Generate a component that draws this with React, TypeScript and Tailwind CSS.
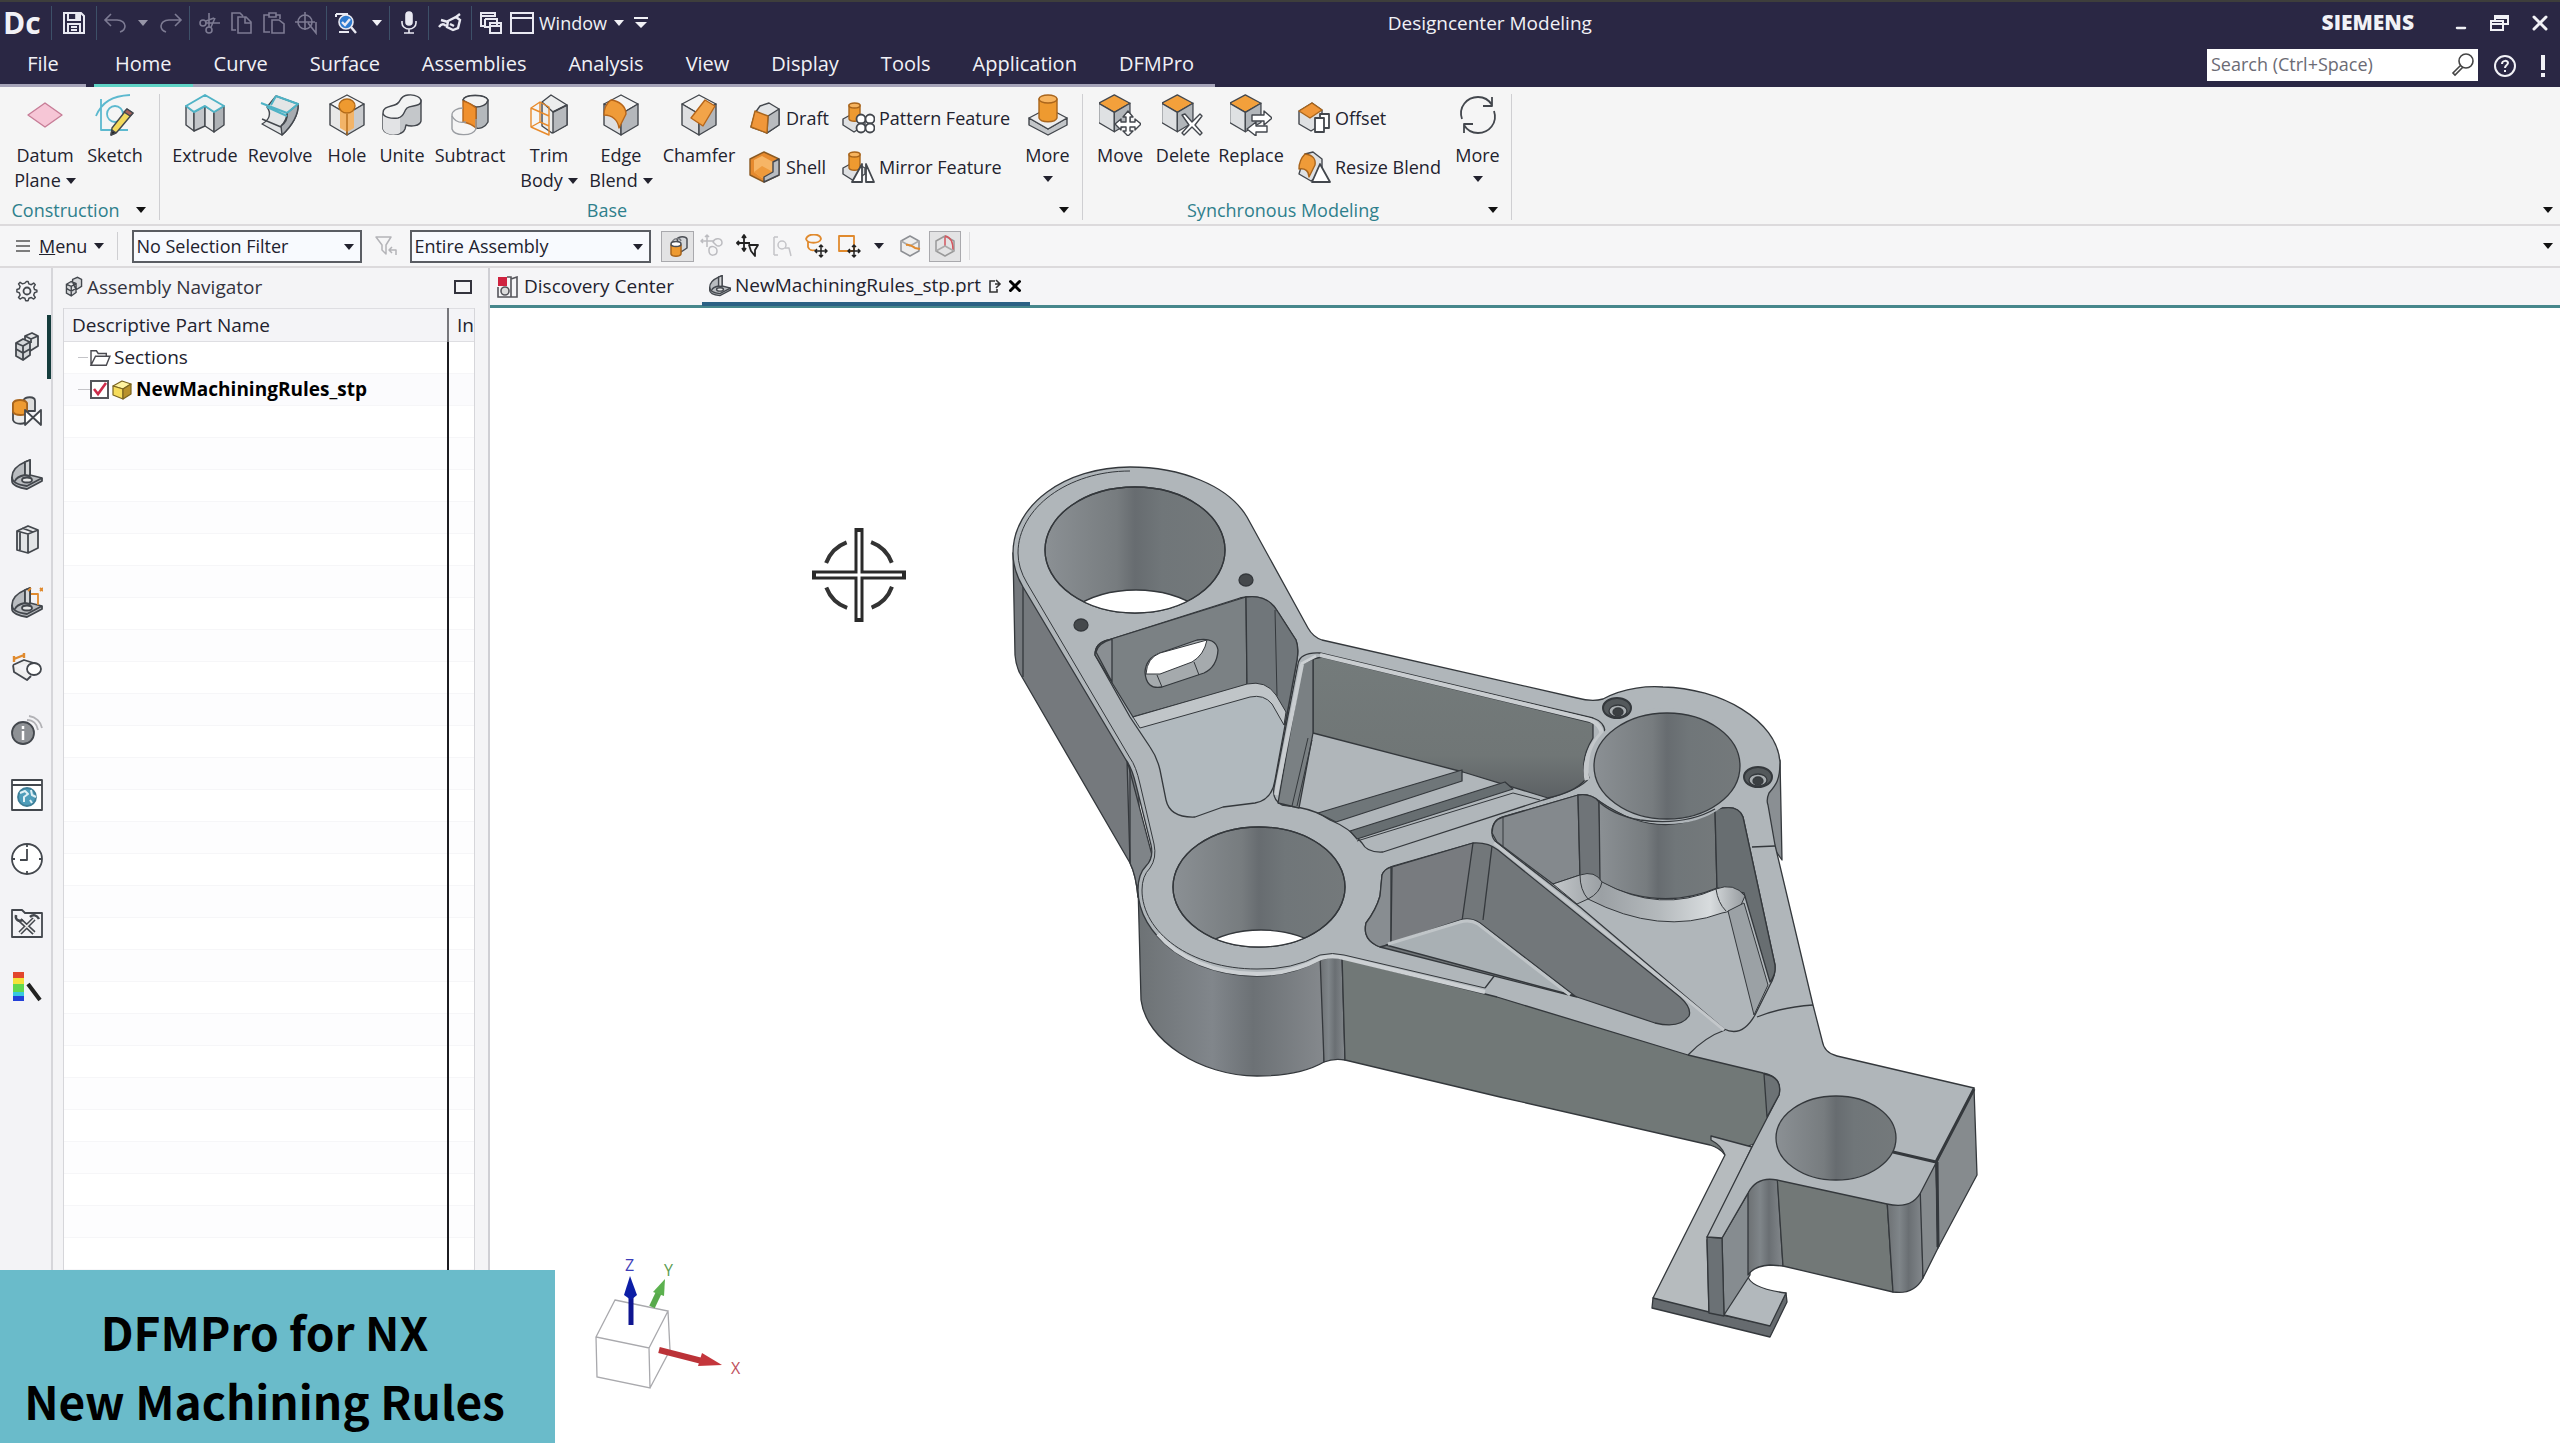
import { ReactNode, useState } from "react";
import { Minus, X } from "lucide-react";

const tabs = [
  "Home",
  "Curve",
  "Surface",
  "Assemblies",
  "Analysis",
  "View",
  "Display",
  "Tools",
  "Application",
  "DFMPro",
];

type IconProps = { className?: string };

const Caret = ({ className = "" }: IconProps) => (
  <svg viewBox="0 0 10 6" className={`h-[6px] w-[10px] shrink-0 ${className}`}>
    <path d="M0 0h10L5 6z" fill="currentColor" />
  </svg>
);

/* ---------- Quick access icons ---------- */

const Quick = ({ children, dim }: { children: ReactNode; dim?: boolean }) => (
  <svg
    viewBox="0 0 24 24"
    className={`h-[24px] w-[24px] ${dim ? "text-[#7d7b93]" : "text-[#e9e9f2]"}`}
    fill="none"
    stroke="currentColor"
    strokeWidth="1.6">
    {children}
  </svg>
);

const SaveIcon = () => (
  <Quick>
    <path d="M2 2h17l3 3v17H2z" strokeWidth="2" />
    <path d="M6 2v7h12V2M6 22v-9h12v9M9 16h6M9 19h6" strokeWidth="2" />
    <path d="M14 3h3v5h-3z" fill="currentColor" />
  </Quick>
);

const UndoIcon = () => (
  <Quick dim>
    <path d="M8 3 2 9l6 6M2 9h12c5 0 8 3 8 6s-2 5-5 6" />
  </Quick>
);

const RedoIcon = () => (
  <Quick dim>
    <path d="m16 3 6 6-6 6M22 9H10c-5 0-8 3-8 6s2 5 5 6" />
  </Quick>
);

const CutIcon = () => (
  <Quick dim>
    <circle cx="5" cy="12" r="3" />
    <circle cx="11" cy="19" r="3" />
    <path d="M8 12h14M11 16V2M13 16l4-9M8 10l8-3" />
  </Quick>
);

const CopyIcon = () => (
  <Quick dim>
    <path d="M6 19H2V2h8l3 3M8 6h8l5 5v11H8zM15 6v6h6" />
  </Quick>
);

const PasteIcon = () => (
  <Quick dim>
    <path d="M8 21H2V4h5M14 4h4v4M7 6V2h7v4zM10 9h7l5 4v9H10z" />
  </Quick>
);

const RepeatIcon = () => (
  <Quick dim>
    <circle cx="11" cy="11" r="7" />
    <path d="M1 11h20M11 1v18M14 12l8 10V11" />
  </Quick>
);

const FinderIcon = () => (
  <Quick>
    <path d="M2 3h12M2 3v3M5 21h10" strokeWidth="2" />
    <circle cx="12" cy="11" r="7" fill="#2f7bd0" />
    <path d="m8 11 3 3 5-6M17 16l5 6" strokeWidth="2.4" />
  </Quick>
);

const MicIcon = () => (
  <Quick>
    <rect x="9" y="1" width="6" height="13" rx="3" fill="currentColor" />
    <path d="M5 10v2a7 6 0 0 0 14 0v-2M12 18v4M7 22h10" />
  </Quick>
);

const TouchIcon = () => (
  <Quick>
    <path d="M1 16c3-4 5-3 7-1M10 10l8-4 4 3-2 8-5 2-6-3zM3 9l7 2M18 6l4-3M12 13l4 2" strokeWidth="2.4" />
  </Quick>
);

const SwitchIcon = () => (
  <Quick>
    <path d="M6 15H2V2h14v4M2 5h14" strokeWidth="2" />
    <path d="M6 8h12v8M6 8v8h5M11 12h11v10H11zM11 15h11" strokeWidth="2" />
  </Quick>
);

const WindowIcon = () => (
  <Quick>
    <path d="M1 2h22v20H1zM1 7h22" strokeWidth="2" />
  </Quick>
);

/* ---------- Ribbon icons ---------- */

const INK = "#43474d";

const Big = ({ children }: { children: ReactNode }) => (
  <svg
    viewBox="0 0 42 42"
    className="h-[42px] w-[42px] shrink-0"
    stroke={INK}
    strokeWidth="1.4"
    strokeLinejoin="round"
    fill="none">
    {children}
  </svg>
);

type BoxProps = { top?: string; left?: string; right?: string };

const Box = ({ top = "#f4f4f4", left = "#dedfe1", right = "#b4b7bb" }: BoxProps) => (
  <>
    <path d="M21 1 38 10 21 20 4 10z" fill={top} />
    <path d="M4 10v21l17 10V20z" fill={left} />
    <path d="M38 10v21L21 41V20z" fill={right} />
  </>
);

const DatumIcon = () => (
  <Big>
    <path d="M21 9 38 21 21 33 4 21z" fill="#f6c6d6" stroke="#c77d97" />
  </Big>
);

const SketchIcon = () => (
  <Big>
    <path d="M7 5v31h27M2 22C8 8 18 2 36 1" stroke="#5cb9cf" strokeWidth="1.8" />
    <circle cx="21" cy="20" r="8" stroke="#5cb9cf" strokeWidth="1.8" />
    <path d="m33 15 6 4-16 19-6 3 1-7z" fill="#f3d95c" />
    <path d="m33 15 6 4-3 3-6-4z" fill="#a8625a" />
    <path d="m18 36-1 5 5-2z" fill="#222" />
  </Big>
);

const ExtrudeIcon = () => (
  <Big>
    <path d="M2 12v19l8 6V18z" fill="#dcdee0" />
    <path d="m10 18 11-6v20l-11 5z" fill="#c2c5c9" />
    <path d="m21 12 9 6v20l-9-6z" fill="#e8e9ea" />
    <path d="m30 18 10-6v19l-10 7z" fill="#aeb2b6" />
    <path d="M2 12 21 1l19 11-10 6-9-6-11 6z" fill="#eef1f2" stroke="#4fb3c6" strokeWidth="2" />
  </Big>
);

const RevolveIcon = () => (
  <Big>
    <path d="M17 2 39 10C40 20 33 32 23 41L3 30C10 26 13 20 8 13z" fill="#e3e5e6" />
    <path d="M39 10C40 20 33 32 23 41l-1-9C30 26 28 20 28 19z" fill="#a7abb0" />
    <path d="M3 25l19 8M28 19c0 6-2 9-6 13" />
    <path d="M2 9l26 10M17 2l22 8-11 9M8 13l20 9M17 2l-5 9" stroke="#4fb3c6" strokeWidth="2" />
  </Big>
);

const HoleIcon = () => (
  <Big>
    <Box left="#e8e8e8" right="#c9cbce" />
    <path d="M14 14v20l7 4 7-4V14z" fill="#f3b468" stroke="none" />
    <ellipse cx="21" cy="12" rx="8" ry="7" fill="#ee9a30" stroke="#b36a18" />
    <path d="M21 20v21" stroke="#b36a18" />
  </Big>
);

const UniteIcon = () => (
  <Big>
    <path d="M2 20v15c2 6 19 8 22 0l1-4c5 2 14 1 15-4V6H21z" fill="#c4c7ca" />
    <path d="M2 20v15c2 6 12 7 17 4V24z" fill="#e2e3e5" stroke="none" />
    <path d="M2 19c0-7 8-6 14-9 4-2 2-8 11-9 8-1 13 3 13 6 0 6-10 4-14 7-4 4-2 8-9 10-7 1-15-1-15-5z" fill="#f2f3f3" />
  </Big>
);

const SubtractIcon = () => (
  <Big>
    <path d="M14 6c2-6 22-6 25 0v22c-3 6-9 7-12 6V12z" fill="#b4b8bc" />
    <path d="M14 6c2-6 22-6 25 0-1 5-7 7-12 7-5-2-9-4-13-7z" fill="#f2f2f2" />
    <path d="M14 7c6 1 9 4 13 7v20c-4-4-8-5-13-6z" fill="#f0902d" stroke="#b7661a" />
    <path d="M14 14c-6 0-11 3-11 7v14c2 7 20 8 24 0V25" stroke="#9a9da2" />
    <path d="M3 22c3 6 9 7 14 6" stroke="#9a9da2" />
  </Big>
);

const TrimIcon = () => (
  <Big>
    <path d="m14 8 9-7 16 10v20L24 39l-10-7z" fill="#eceded" />
    <path d="m39 11-14 7v21l14-8z" fill="#b7babe" />
    <path d="m14 8 11 10 14-7" />
    <path d="M3 14 12 8v20l-9 5zM3 14l18 8v19L3 33M12 8l9 5v9M12 28l9 4" stroke="#e88a2a" />
  </Big>
);

const EdgeBlendIcon = () => (
  <Big>
    <Box />
    <path d="M11 6c8 1 15 6 15 14l-7 14C18 26 12 21 4 21c0-6 3-12 7-15z" fill="#ef9b38" stroke="#b7661a" />
  </Big>
);

const ChamferIcon = () => (
  <Big>
    <Box />
    <path d="m27 6 10 6-12 20-12-8z" fill="#f3a449" stroke="#b7661a" />
  </Big>
);

const MoreFeatureIcon = () => (
  <Big>
    <path d="M2 24v7l19 10 19-10v-7L21 35z" fill="#c3c6c9" />
    <path d="m21 14 19 10-19 11L2 24z" fill="#ededee" />
    <path d="M12 5v19c2 5 16 5 18 0V5z" fill="#ee9a30" stroke="#a9651c" />
    <ellipse cx="21" cy="5" rx="9" ry="4" fill="#f7b45f" stroke="#a9651c" />
  </Big>
);

const SyncBox = ({ children }: { children: ReactNode }) => (
  <Big>
    <g transform="translate(-4 0) scale(.92)">
      <Box top="#f3a03b" left="#dfe1e3" right="#b2b6ba" />
    </g>
    {children}
  </Big>
);

const MoveIcon = () => (
  <SyncBox>
    <path
      d="m29 17 5 6h-3v5h5v-3l6 5-6 6v-3h-5v4h3l-5 5-5-5h3v-4h-5v3l-6-6 6-5v3h5v-5h-3z"
      fill="#fff"
    />
  </SyncBox>
);

const DeleteIcon = () => (
  <SyncBox>
    <path d="m20 21 3-1 7 8 8-8 2 2-7 9 7 8-2 2-8-8-8 8-2-2 7-8z" fill="#fff" />
  </SyncBox>
);

const ReplaceIcon = () => (
  <SyncBox>
    <path d="M22 21h12v-4l8 7-8 7v-4H22z" fill="#fff" />
    <path d="M37 32H26v-4l-9 7 9 7v-4h11z" fill="#fff" />
  </SyncBox>
);

const SyncMoreIcon = () => (
  <Big>
    <path d="M5 25C1 13 10 3 21 3c6 0 11 3 14 8M35 3v9h-9M37 17c4 12-5 22-16 22-6 0-11-3-14-8M7 39v-9h9" strokeWidth="1.8" />
  </Big>
);

const Small = ({ children }: { children: ReactNode }) => (
  <svg
    viewBox="0 0 34 32"
    className="h-[32px] w-[34px] shrink-0"
    stroke={INK}
    strokeWidth="1.4"
    strokeLinejoin="round"
    fill="none">
    {children}
  </svg>
);

const DraftIcon = () => (
  <Small>
    <path d="m12 4 9-3 10 6v16l-12 8L3 25 7 11z" fill="#e2e4e6" />
    <path d="m20 14 11-7v16l-12 8z" fill="#b8bbbf" />
    <path d="m7 9 13 5-1 17-16-6z" fill="#f0973a" stroke="#a9651c" />
  </Small>
);

const ShellIcon = () => (
  <Small>
    <path d="M16 1 31 8v16l-15 7L2 24V8z" fill="#e68a2e" stroke="#8b5a22" />
    <path d="m14 5 11 6v10l-11 6-8-6V9z" fill="#f6b566" stroke="none" />
    <path d="m6 21 8-6 11 6-11 6z" fill="#ee9a3c" stroke="none" />
    <path d="M31 8v16l-15 7v-5l9-5V11z" fill="#b9bcc0" />
  </Small>
);

const Peg = () => (
  <>
    <path d="m2 17 11-6 11 6v6l-11 7L2 23z" fill="#dfe1e3" />
    <path d="M8 3v14c1 3 10 3 11 0V3z" fill="#ee9a30" stroke="#a9651c" />
    <ellipse cx="13.5" cy="3.5" rx="5.5" ry="2.5" fill="#f7b45f" stroke="#a9651c" />
  </>
);

const PatternIcon = () => (
  <Small>
    <Peg />
    <g fill="#fff" strokeWidth="1.8">
      <circle cx="20" cy="17" r="4.5" />
      <circle cx="29" cy="17" r="4.5" />
      <circle cx="20" cy="26" r="4.5" />
      <circle cx="29" cy="26" r="4.5" />
    </g>
  </Small>
);

const MirrorIcon = () => (
  <Small>
    <Peg />
    <path d="M21 13v18H11zM25 13v18h8z" fill="#fff" strokeWidth="1.8" />
  </Small>
);

const OffsetIcon = () => (
  <Small>
    <path d="m2 9 13-8 10 7v14l-11 7L2 22z" fill="#dfe1e3" />
    <path d="m2 9 13-8 10 7-12 8z" fill="#f0973a" stroke="#a9651c" />
    <path d="M18 16h9v14h-9zM23 16v-4h9v14h-5" fill="#fff" strokeWidth="1.8" />
  </Small>
);

const ResizeBlendIcon = () => (
  <Small>
    <path d="m8 3 8-2 9 7v14l-11 8L2 23z" fill="#dfe1e3" />
    <path d="M8 3c8 1 11 5 10 11l-6 12C12 20 8 17 2 18c0-6 2-11 6-15z" fill="#ef9b38" stroke="#a9651c" />
    <path d="m23 13 10 18H15z" fill="#fff" strokeWidth="1.8" />
  </Small>
);

/* ---------- Ribbon parts ---------- */

type ToolProps = {
  icon: ReactNode;
  lines: string[];
  width: string;
  caret?: "inline" | "below";
};

const Tool = ({ icon, lines, width, caret }: ToolProps) => (
  <button
    type="button"
    className={`${width} flex shrink-0 flex-col items-center text-[18px] leading-[25px] hover:bg-[#e3e9ec]`}>
    <span className="mb-[7px]">{icon}</span>
    {lines.map((line, i) => (
      <span key={line} className="flex items-center gap-[5px] whitespace-nowrap">
        {line}
        {caret === "inline" && i === lines.length - 1 && <Caret />}
      </span>
    ))}
    {caret === "below" && <Caret className="mt-[8px]" />}
  </button>
);

const SmallTool = ({ icon, label }: { icon: ReactNode; label: string }) => (
  <button
    type="button"
    className="flex h-[32px] items-center gap-[4px] text-[18px] whitespace-nowrap hover:bg-[#e3e9ec]">
    {icon}
    {label}
  </button>
);

const ToolGroup = ({ title, children }: { title: string; children: ReactNode }) => (
  <section aria-label={title} className="flex flex-col">
    <div className="mt-[7px] mb-[4px] flex flex-1 flex-col border-r border-[#cfcfd2]">
      <div className="flex flex-1 items-start">{children}</div>
      <div className="flex h-[20px] items-center pl-[8px] text-[18px] leading-[20px] text-[#2e7f8c]">
        <span className="flex-1 text-center">{title}</span>
        <button type="button" aria-label={`${title} options`} className="w-[36px] text-[#111]">
          <Caret className="mx-auto" />
        </button>
      </div>
    </div>
  </section>
);

const Ribbon = () => (
  <div className="flex h-[139px] border-b-2 border-[#dcdadc] bg-[#f5f5f5] text-[#22222e]">
    <ToolGroup title="Construction">
      <Tool icon={<DatumIcon />} lines={["Datum", "Plane"]} width="ml-[8px] w-[74px]" caret="inline" />
      <Tool icon={<SketchIcon />} lines={["Sketch"]} width="mr-[11px] w-[66px]" />
    </ToolGroup>
    <ToolGroup title="Base">
      <Tool icon={<ExtrudeIcon />} lines={["Extrude"]} width="ml-[10px] w-[70px]" />
      <Tool icon={<RevolveIcon />} lines={["Revolve"]} width="w-[80px]" />
      <Tool icon={<HoleIcon />} lines={["Hole"]} width="w-[54px]" />
      <Tool icon={<UniteIcon />} lines={["Unite"]} width="w-[56px]" />
      <Tool icon={<SubtractIcon />} lines={["Subtract"]} width="w-[80px]" />
      <Tool icon={<TrimIcon />} lines={["Trim", "Body"]} width="w-[78px]" caret="inline" />
      <Tool icon={<EdgeBlendIcon />} lines={["Edge", "Blend"]} width="w-[66px]" caret="inline" />
      <Tool icon={<ChamferIcon />} lines={["Chamfer"]} width="w-[90px]" />
      <div className="ml-[4px] flex w-[93px] flex-col gap-[17px] pt-[8px]">
        <SmallTool icon={<DraftIcon />} label="Draft" />
        <SmallTool icon={<ShellIcon />} label="Shell" />
      </div>
      <div className="flex w-[172px] flex-col gap-[17px] pt-[8px]">
        <SmallTool icon={<PatternIcon />} label="Pattern Feature" />
        <SmallTool icon={<MirrorIcon />} label="Mirror Feature" />
      </div>
      <Tool icon={<MoreFeatureIcon />} lines={["More"]} width="w-[69px]" caret="below" />
    </ToolGroup>
    <ToolGroup title="Synchronous Modeling">
      <Tool icon={<MoveIcon />} lines={["Move"]} width="ml-[6px] w-[62px]" />
      <Tool icon={<DeleteIcon />} lines={["Delete"]} width="w-[64px]" />
      <Tool icon={<ReplaceIcon />} lines={["Replace"]} width="w-[72px]" />
      <div className="ml-[10px] flex w-[147px] flex-col gap-[17px] pt-[8px]">
        <SmallTool icon={<OffsetIcon />} label="Offset" />
        <SmallTool icon={<ResizeBlendIcon />} label="Resize Blend" />
      </div>
      <Tool icon={<SyncMoreIcon />} lines={["More"]} width="w-[67px]" caret="below" />
    </ToolGroup>
    <button type="button" aria-label="Ribbon options" className="mr-[5px] mb-[9px] ml-auto self-end p-[2px] text-[#111]">
      <Caret />
    </button>
  </div>
);

/* ---------- Title bar ---------- */

const Divider = () => <span className="h-[34px] w-px shrink-0 bg-[#3d5068]" />;

const Slot = ({ label, width, children }: { label: string; width: string; children: ReactNode }) => (
  <button
    type="button"
    aria-label={label}
    className={`${width} flex shrink-0 items-center justify-center`}>
    {children}
  </button>
);

const TitleBar = () => (
  <div className="flex h-[42px] items-center">
    <div className="flex items-center">
      <span className="w-[51px] pl-[3px] text-[30px] leading-[40px] font-bold">Dc</span>
      <Divider />
      <Slot label="Save" width="w-[44px]"><SaveIcon /></Slot>
      <Divider />
      <Slot label="Undo" width="w-[36px]"><UndoIcon /></Slot>
      <Slot label="Undo list" width="w-[20px]"><Caret className="text-[#9796a8]" /></Slot>
      <Slot label="Redo" width="w-[36px]"><RedoIcon /></Slot>
      <Divider />
      <div className="flex w-[136px] justify-center">
        <Slot label="Cut" width="w-[32px]"><CutIcon /></Slot>
        <Slot label="Copy" width="w-[32px]"><CopyIcon /></Slot>
        <Slot label="Paste" width="w-[32px]"><PasteIcon /></Slot>
        <Slot label="Repeat command" width="w-[32px]"><RepeatIcon /></Slot>
      </div>
      <Divider />
      <Slot label="Command finder" width="w-[38px]"><FinderIcon /></Slot>
      <Slot label="Finder list" width="w-[24px]"><Caret /></Slot>
      <Divider />
      <Slot label="Voice" width="w-[38px]"><MicIcon /></Slot>
      <Divider />
      <Slot label="Touch mode" width="w-[42px]"><TouchIcon /></Slot>
      <Divider />
      <Slot label="Switch window" width="w-[38px]"><SwitchIcon /></Slot>
      <button type="button" className="flex items-center gap-[5px] text-[18px]">
        <WindowIcon />
        Window
        <Caret className="ml-[2px]" />
      </button>
      <Slot label="Customize" width="w-[34px]">
        <svg viewBox="0 0 14 12" className="h-[12px] w-[14px]" fill="currentColor">
          <path d="M0 0h14v2H0zM1 5h12l-6 6z" />
        </svg>
      </Slot>
    </div>
    <h1 className="flex-1 text-center text-[19px]">Designcenter Modeling</h1>
    <div className="flex items-center justify-end pr-[8px]">
      <span className="mr-[40px] text-[21px] font-extrabold">SIEMENS</span>
      <button type="button" aria-label="Minimize" className="mr-[22px] pt-[10px]">
        <Minus className="h-[14px] w-[14px]" strokeWidth={4} />
      </button>
      <button type="button" aria-label="Restore" className="mr-[18px]">
        <svg viewBox="0 0 20 16" className="h-[16px] w-[20px]" fill="none" stroke="currentColor" strokeWidth="2">
          <path d="M1 6h12v9H1zM1 9h12M5 6V1h13v8h-4M5 3h13" />
        </svg>
      </button>
      <button type="button" aria-label="Close">
        <X className="h-[24px] w-[24px]" strokeWidth={3} />
      </button>
    </div>
  </div>
);

const TabBar = ({ active, onSelect }: { active: string; onSelect: (tab: string) => void }) => (
  <div className="flex h-[43px] items-stretch text-[20px]">
    <nav className="flex">
      <button type="button" className="mr-[8px] w-[86px] border-b-[3px] border-[#a5a3b8]">
        File
      </button>
      {tabs.map((tab) => (
        <button
          key={tab}
          type="button"
          onClick={() => onSelect(tab)}
          className={`border-b-[3px] px-[21px] ${
            tab === active ? "border-[#5fd3c5]" : "border-[#a5a3b8]"
          }`}>
          {tab}
        </button>
      ))}
    </nav>
    <div className="mr-[10px] ml-auto flex items-center">
      <label className="mb-[2px] flex h-[32px] w-[271px] items-center bg-white pr-[3px] pl-[4px]">
        <input
          type="text"
          aria-label="Search"
          placeholder="Search (Ctrl+Space)"
          className="min-w-0 flex-1 text-[18px] text-[#333] outline-none placeholder:text-[#6b6b75]"
        />
        <svg viewBox="0 0 24 24" className="h-[24px] w-[24px]" fill="none" stroke="#444" strokeWidth="1.6">
          <circle cx="15" cy="8" r="7" />
          <path d="m10 12-8 8 2 2 8-8" />
        </svg>
      </label>
      <button type="button" aria-label="Help" className="ml-[16px]">
        <svg viewBox="0 0 22 22" className="h-[22px] w-[22px]" fill="none" stroke="currentColor" strokeWidth="2">
          <circle cx="11" cy="11" r="10" />
          <path d="M8 9c0-4 6-4 6-1 0 2-3 2-3 5M11 15v2" />
        </svg>
      </button>
      <button type="button" aria-label="Notifications" className="ml-[24px] pr-[4px]">
        <svg viewBox="0 0 6 24" className="h-[24px] w-[6px]" fill="currentColor">
          <path d="M1 1h4v15H1zM1 19h4v4H1z" />
        </svg>
      </button>
    </div>
  </div>
);

/* ---------- Selection bar ---------- */

const Mini = ({ children }: { children: ReactNode }) => (
  <svg
    viewBox="0 0 24 24"
    className="h-[24px] w-[24px] shrink-0"
    fill="none"
    stroke="#4b4e54"
    strokeWidth="1.5"
    strokeLinejoin="round">
    {children}
  </svg>
);

const Picker = ({ label, options, width }: { label: string; options: string[]; width: string }) => (
  <div className={`relative ${width}`}>
    <select
      aria-label={label}
      className="block h-[33px] w-full appearance-none border-2 border-[#5a5d63] bg-[#f8fafe] pl-[2px] text-[18px] leading-[28px]">
      {options.map((option) => (
        <option key={option}>{option}</option>
      ))}
    </select>
    <Caret className="pointer-events-none absolute top-[14px] right-[8px]" />
  </div>
);

const SelectionBar = () => (
  <div className="flex h-[42px] items-center border-b-2 border-[#dcdadc] bg-[#f6f6f7] text-[#22222e]">
    <button type="button" className="ml-[16px] flex items-center text-[18px]">
      <svg viewBox="0 0 14 14" className="mr-[9px] h-[14px] w-[14px]" stroke="#555" strokeWidth="1.5">
        <path d="M0 2h14M0 7h14M0 12h14" />
      </svg>
      <span>
        <span className="underline">M</span>enu
      </span>
      <Caret className="ml-[7px]" />
    </button>
    <span className="mr-[14px] ml-[13px] h-[28px] w-px bg-[#cfcfd2]" />
    <Picker label="Selection filter" options={["No Selection Filter"]} width="w-[230px]" />
    <button type="button" aria-label="Reset filters" className="mx-[12px]">
      <Mini>
        <path d="M2 3h15l-5 8v9l-4-4v-5zM22 21v-5h-7m3-3-3 3 3 3" stroke="#b4b4b8" />
      </Mini>
    </button>
    <Picker label="Selection scope" options={["Entire Assembly"]} width="w-[241px]" />
    <div className="ml-[10px] flex items-center">
      <button type="button" aria-label="Select solid" className="flex h-[31px] w-[33px] items-center justify-center border border-[#a9a9ad] bg-[#e3e3e4]">
        <Mini>
          <path d="M11 5c2-3 9-3 10 0v9l-6 4z" fill="#d4d6d9" />
          <path d="M6 9c1-5 8-6 9-2" stroke="#77797e" />
          <path d="M5 11v9c1 3 9 3 10 0v-9z" fill="#ee9a30" stroke="#a9651c" />
          <ellipse cx="10" cy="10" rx="5" ry="2.500" fill="#fff" />
        </Mini>
      </button>
      <button type="button" aria-label="Select similar" className="ml-[6px]">
        <Mini>
          <path d="M1 7h12M7 1v12M5 3l2-2 2 2M3 5 1 7l2 2" stroke="#bcbcc0" />
          <path d="M13 8c2-5 9-4 9 1 0 3-4 4-6 2zM9 15c1-4 8-3 8 2s-8 6-8 0z" stroke="#bcbcc0" />
        </Mini>
      </button>
      <button type="button" aria-label="Select connected" className="ml-[12px]">
        <Mini>
          <path d="M1 9h13M8 2v14M6 4l2-3 2 3M6 14l2 3 2-3M3 7 1 9l2 2M13 11h9l-3 5v6l-4-5z" stroke="#222" strokeWidth="1.8" />
        </Mini>
      </button>
      <button type="button" aria-label="Select chain" className="ml-[9px]">
        <Mini>
          <path d="M5 3v18M5 21h4M5 3h4M16 14h4l2 8" stroke="#c4c4c8" />
          <circle cx="13" cy="11" r="4" stroke="#c4c4c8" />
        </Mini>
      </button>
      <button type="button" aria-label="Select face" className="ml-[11px]">
        <Mini>
          <path d="M2 5c2-6 14-6 15 0-2 5-13 5-15 0zM4 7v6c1 3 4 4 7 3" stroke="#e08a2e" strokeWidth="1.8" />
          <path d="M11 17h12M17 11v12M15 13l2-2 2 2M15 21l2 2 2-2M13 15l-2 2 2 2M21 15l2 2-2 2" stroke="#222" />
        </Mini>
      </button>
      <button type="button" aria-label="Rectangle select" className="ml-[9px]">
        <Mini>
          <path d="M2 2h15v15H2z" stroke="#e08a2e" strokeWidth="1.8" />
          <path d="M11 17h12M17 11v12M15 13l2-2 2 2M15 21l2 2 2-2M13 15l-2 2 2 2M21 15l2 2-2 2" stroke="#222" />
        </Mini>
      </button>
      <Caret className="ml-[13px]" />
      <button type="button" aria-label="Shaded" className="ml-[14px]">
        <Mini>
          <path d="m12 2 9 5v10l-9 5-9-5V7z" fill="#eee" stroke="#8d8f94" />
          <path d="m3 7 9 5 9-5" stroke="#aaa" />
          <path d="M8 11c4-1 6 1 9 3l5 1" stroke="#e08a2e" strokeWidth="2" />
        </Mini>
      </button>
      <button type="button" aria-label="Edges" className="ml-[7px] flex h-[31px] w-[32px] items-center justify-center border border-[#a9a9ad] bg-[#e3e3e4]">
        <Mini>
          <path d="m12 2 9 5v10l-9 5-9-5V7z" stroke="#999" />
          <path d="M12 2c6 1 8 6 8 14M12 3v9" stroke="#d4565e" />
          <path d="m3 17 9-5 9 5" stroke="#aaa" />
        </Mini>
      </button>
      <span className="ml-[8px] h-[28px] w-px bg-[#dcdcde]" />
    </div>
    <button type="button" aria-label="Selection bar options" className="mr-[5px] ml-auto p-[2px] text-[#111]">
      <Caret />
    </button>
  </div>
);

/* ---------- Resource bar ---------- */

const Resource = ({ children }: { children: ReactNode }) => (
  <svg
    viewBox="0 0 32 32"
    className="h-[32px] w-[32px]"
    fill="none"
    stroke={INK}
    strokeWidth="1.8"
    strokeLinejoin="round">
    {children}
  </svg>
);

const Bracket = () => (
  <>
    <path d="M1 18C1 11 7 6 14 3l5-2v15l12 3v3l-15 8C8 29 1 26 1 22z" fill="#b9bcc0" />
    <path d="M1 18c0 5 7 8 15 9l15-8M14 3v13C9 17 5 19 4 22M14 16l5 1" />
    <path d="M14 3v13l5 1V1z" fill="#d6d8da" />
    <ellipse cx="16" cy="21" rx="5" ry="2.500" fill="#e6e7e8" />
  </>
);

const resources = [
  {
    label: "Settings",
    icon: (
      <Resource>
        <path
          d="m14 6 1-1h2l1 3 3 1 3-2 2 2-2 3 1 3 3 1v2l-3 1-1 3 2 3-2 2-3-2-3 1-1 3h-3l-1-3-3-1-3 2-2-2 2-3-1-3-3-1v-3l3-1 1-3-2-3 2-2 3 2 3-1z"
          transform="translate(3.500 1.500) scale(.8)"
        />
        <circle cx="16" cy="15" r="3.500" />
      </Resource>
    ),
  },
  {
    label: "Assembly Navigator",
    icon: (
      <Resource>
        <path d="M14 9V5l7-3 6 3v10l-8 5z" fill="#e2e4e6" />
        <path d="m14 5 6 3 7-3M20 8v4" />
        <path d="m5 12 7-4 7 3v13l-7 5-7-4z" fill="#d5d7da" />
        <path d="m5 12 7 3 7-4M12 15v14M5 18l7 4 7-4" />
      </Resource>
    ),
  },
  {
    label: "Constraint Navigator",
    icon: (
      <Resource>
        <path d="M12 6c2-5 12-5 12 0v10h-8z" fill="#ddd" />
        <path d="M2 9v16c2 5 13 5 14 0V9z" fill="#ececec" />
        <path d="M2 8v9c2 4 13 4 14 0V8C14 4 4 4 2 8z" fill="#ee9a30" stroke="#a9651c" />
        <path d="m14 15 16 15V15L14 30z" fill="#fff" />
      </Resource>
    ),
  },
  { label: "Part Navigator", icon: <Resource><Bracket /></Resource> },
  {
    label: "Reuse Library",
    icon: (
      <Resource>
        <path d="m6 8 11-5 10 4v18l-10 5-11-3zM6 8l11 3 10-4M17 11v19M9 9v18M11 5l11 4" fill="#e2e4e6" />
      </Resource>
    ),
  },
  {
    label: "Synchronous",
    icon: (
      <Resource>
        <Bracket />
        <path d="M20 7h7v11M29 4l3-3M29 1l3 3M17 4l3-3" stroke="#e08a2e" />
      </Resource>
    ),
  },
  {
    label: "Measure",
    icon: (
      <Resource>
        <path d="m2 14 11-5 13 4M2 14l1 7 13 8 4-4" fill="#eee" />
        <ellipse cx="23" cy="18" rx="7" ry="6" fill="#fff" />
        <path d="m3 8 10-4M3 5v6M13 2v5" stroke="#e08a2e" strokeWidth="2.400" />
      </Resource>
    ),
  },
  {
    label: "Information",
    icon: (
      <Resource>
        <circle cx="12" cy="18" r="11" fill="#8e9195" />
        <path d="M12 16v9M12 11v3" stroke="#fff" strokeWidth="2.500" />
        <path d="M16 5c6 0 10 4 11 10M18 1c7 1 12 6 13 12" stroke="#b2b2b6" />
      </Resource>
    ),
  },
  {
    label: "Web Browser",
    icon: (
      <Resource>
        <path d="M1 1h30v30H1zM1 6h30" fill="#fff" />
        <circle cx="16" cy="18" r="9" fill="#4f9dba" stroke="#3e7f98" />
        <path d="m9 14 5-2 3 3-4 3v5M20 11l1 5 4 2M19 21l2 3" stroke="#dff0f5" strokeWidth="2" />
      </Resource>
    ),
  },
  {
    label: "History",
    icon: (
      <Resource>
        <circle cx="16" cy="16" r="15" fill="#fff" />
        <path d="M16 6v11H9M16 1v3M16 28v3M1 16h3M28 16h3" />
      </Resource>
    ),
  },
  {
    label: "Process Studio",
    icon: (
      <Resource>
        <path d="M1 3h10l3 3h17v24H1z" />
        <path d="m9 13 14 13M23 12 9 26" strokeWidth="4.500" />
        <path d="m9 13 14 13M23 12 9 26" stroke="#eee" strokeWidth="1.500" />
        <path d="M5 8c-1 5 3 7 7 5M19 10c3-3 7-2 9 2" strokeWidth="2.500" />
      </Resource>
    ),
  },
  {
    label: "Manufacturing Wizards",
    icon: (
      <Resource>
        <g stroke="none">
          <path d="M2 1h11v6H2z" fill="#e2462c" />
          <path d="M2 7h11v6H2z" fill="#f4e23a" />
          <path d="M2 13h11v8H2z" fill="#62d84e" />
          <path d="M2 21h11v4H2z" fill="#38c8e0" />
          <path d="M2 25h11v5H2z" fill="#2340d8" />
        </g>
        <path d="m17 13 9 12 3 4" stroke="#222" strokeWidth="4" />
      </Resource>
    ),
  },
];

const ResourceBar = () => (
  <nav className="flex w-[53px] shrink-0 flex-col border-r-2 border-[#d6d6da] bg-[#f3f3f6]">
    {resources.map((item, i) => (
      <button
        key={item.label}
        type="button"
        aria-label={item.label}
        className={`flex shrink-0 items-center border-r-[4px] pl-[11px] ${
          i === 0 ? "h-[47px]" : "h-[64px]"
        } ${i === 1 ? "border-[#143c3c]" : "border-transparent"}`}>
        {item.icon}
      </button>
    ))}
  </nav>
);

/* ---------- Assembly navigator ---------- */

const Navigator = () => {
  const [checked, setChecked] = useState(true);
  const blankRows = Array.from({ length: 32 });

  return (
    <aside className="flex w-[437px] shrink-0 flex-col overflow-hidden border-r-2 border-[#cfcfd4] bg-[#f4f4f6] pl-[10px]">
      <div className="flex h-[40px] shrink-0 items-center pb-[2px] text-[19px] text-[#33333d]">
        <svg viewBox="0 0 32 32" className="h-[22px] w-[22px]" fill="#d5d7da" stroke={INK} strokeWidth="2">
          <path d="M14 9V5l7-3 6 3v10l-8 5zM5 12l7-4 7 3v13l-7 5-7-4zM5 12l7 3 7-4M12 15v14M5 18l7 4 7-4" />
        </svg>
        <h2 className="pl-[2px]">Assembly Navigator</h2>
        <button type="button" aria-label="Pin panel" className="mr-[16px] ml-auto h-[14px] w-[18px] border-2 border-[#33333d]" />
      </div>
      <div className="mr-[13px] flex-1 overflow-hidden border-x border-[#d6d6da] bg-white">
        <table className="w-full table-fixed border-collapse text-[19px] text-[#22222e]">
          <thead>
            <tr className="h-[33px] border-y border-[#dedee2] bg-[#f4f4f7]">
              <th scope="col" className="w-[384px] border-r-2 border-[#77777c] pl-[8px] text-left font-normal">
                Descriptive Part Name
              </th>
              <th scope="col" className="overflow-hidden pl-[8px] text-left font-normal">In</th>
            </tr>
          </thead>
          <tbody>
            <tr className="h-[32px] border-b border-[#f6f6f8]">
              <td className="border-r-2 border-[#1c1c20]">
                <div className="flex h-[31px] items-center">
                  <span className="ml-[14px] h-px w-[10px] bg-[#c4c4c8]" />
                  <svg viewBox="0 0 24 20" className="h-[18px] w-[24px]" fill="none" stroke="#4a4a50" strokeWidth="1.6">
                    <path d="M2 18V2h6l2 3h9v3M2 18 7 8h16l-4 10z" />
                  </svg>
                  <span className="pl-[2px]">Sections</span>
                </div>
              </td>
              <td />
            </tr>
            <tr className="h-[32px] border-b border-[#f6f6f8] bg-[#fbfbfd]">
              <td className="border-r-2 border-[#1c1c20]">
                <label className="flex h-[31px] items-center">
                  <span className="ml-[14px] h-px w-[12px] bg-[#c4c4c8]" />
                  <span className="relative h-[19px] w-[19px]">
                    <input
                      type="checkbox"
                      checked={checked}
                      onChange={() => setChecked(!checked)}
                      className="block h-[19px] w-[19px] appearance-none border-2 border-[#55555b] bg-white"
                    />
                    {checked && (
                      <svg viewBox="0 0 19 19" className="pointer-events-none absolute inset-0" fill="none" stroke="#cc2b4a" strokeWidth="2.600">
                        <path d="m4 9 4 5 8-11" />
                      </svg>
                    )}
                  </span>
                  <svg viewBox="0 0 20 20" className="ml-[3px] h-[20px] w-[20px]" stroke="#7a6420" strokeWidth="1.2" strokeLinejoin="round">
                    <path d="m1 6 9-5 9 3-8 5z" fill="#fff3a0" />
                    <path d="M1 6v9l10 4V9z" fill="#f6dc5c" />
                    <path d="m19 4-8 5v10l8-5z" fill="#b8912c" />
                  </svg>
                  <span className="pl-[4px] font-bold text-black">NewMachiningRules_stp</span>
                </label>
              </td>
              <td />
            </tr>
            {blankRows.map((_, i) => (
              <tr key={i} className="h-[32px] border-b border-[#f6f6f8] even:bg-[#fdfdfe]">
                <td className="border-r-2 border-[#1c1c20]" />
                <td />
              </tr>
            ))}
          </tbody>
        </table>
      </div>
    </aside>
  );
};

/* ---------- Graphics window ---------- */

const LINE = "#34383c";
const TOP = "#b0b6ba";

const Part = () => (
  <g stroke={LINE} strokeWidth="1.3" strokeLinejoin="round">
    <defs>
      <linearGradient id="bore">
        <stop offset="0" stopColor="#8b9094" />
        <stop offset=".4" stopColor="#777c7f" />
        <stop offset=".5" stopColor="#676c70" />
        <stop offset=".65" stopColor="#707679" />
        <stop offset="1" stopColor="#74797b" />
      </linearGradient>
      <linearGradient id="drum">
        <stop offset="0" stopColor="#6d7275" />
        <stop offset=".4" stopColor="#81868b" />
        <stop offset=".62" stopColor="#6c7175" />
        <stop offset="1" stopColor="#85898d" />
      </linearGradient>
      <linearGradient id="post">
        <stop offset="0" stopColor="#6d7174" />
        <stop offset=".35" stopColor="#7f8589" />
        <stop offset=".6" stopColor="#6a6f73" />
        <stop offset="1" stopColor="#83888c" />
      </linearGradient>
      <linearGradient id="wall" x1="0" y1="0" x2="0" y2="1">
        <stop offset="0" stopColor="#747b7b" />
        <stop offset=".7" stopColor="#707676" />
        <stop offset="1" stopColor="#5c6164" />
      </linearGradient>
      <linearGradient id="ring">
        <stop offset="0" stopColor="#c3c7ca" />
        <stop offset=".25" stopColor="#9ba0a4" />
        <stop offset=".55" stopColor="#b4b9bc" />
        <stop offset=".82" stopColor="#d8dcde" />
        <stop offset="1" stopColor="#969b9f" />
      </linearGradient>
      <clipPath id="bore-a"><ellipse cx="1135" cy="550" rx="90" ry="63" /></clipPath>
      <clipPath id="bore-b"><ellipse cx="1259" cy="887" rx="86" ry="60" /></clipPath>
    </defs>

    {/* Outer walls */}
    <path
      d="M1013 553L1015 655Q1016 668 1022 677L1130 863Q1136 875 1138 897L1140 700L1200 560z"
      fill="#75797d"
    />
    <path d="M1127 760L1130 863Q1136 875 1138 897L1152 855z" fill="#7f8488" />
    <path d="M1023 585V677M1130 763V863" fill="none" />
    <path
      d="M1138 885L1141 1000C1146 1040 1200 1076 1257 1076Q1300 1076 1324 1062V940z"
      fill="url(#drum)"
    />
    <path d="M1320 955L1324 1062Q1334 1058 1345 1060L1342 955z" fill="url(#post)" />
    <path d="M1342 955L1345 1060L1500 1097L1710 1145Q1720 1148 1725 1155L1790 1130V1060z" fill="#717877" />
    <path d="M1780 760L1782 860L1775 850L1760 800z" fill="#8a8f93" />

    {/* Clamp foot */}
    <path d="M1711 1136L1752 1147L1707 1240L1709 1314L1653 1298L1725 1155Q1722 1146 1711 1140z" fill="#b6bbbe" />
    <path d="M1653 1298L1709 1312L1770 1325L1786 1293L1787 1302L1770 1337L1652 1308z" fill="#666b6f" />
    <path d="M1724 1313L1748 1276Q1750 1288 1786 1293L1770 1326L1724 1315z" fill="#b2b8bc" />
    <path d="M1722 1238L1750 1190V1275L1724 1315z" fill="#868c90" />
    <path d="M1707 1237L1722 1238L1724 1316L1709 1313z" fill="#6b7175" />

    {/* Clamp block */}
    <path d="M1748 1180V1275Q1754 1266 1770 1265L1783 1266L1777 1170z" fill="url(#post)" />
    <path d="M1777 1175L1783 1266L1893 1292L1887 1200z" fill="#727877" />
    <path d="M1887 1200L1893 1292Q1914 1295 1923 1278L1921 1180z" fill="url(#post)" />
    <path d="M1920 1185L1923 1278L1938 1248L1936 1160z" fill="#858a8d" />
    <path d="M1936 1163L1938 1248L1977 1175L1974 1088z" fill="#868b8e" />

    {/* Top face */}
    <path
      d="M1013 553C1013 505 1065 467 1130 467C1180 467 1228 485 1247 517L1308 628Q1313 637 1322 640L1577 698Q1592 702 1603 699
         C1625 687 1650 686 1663 687C1720 688 1777 720 1780 762C1780 780 1776 785 1769 793Q1766 800 1768 805L1775 845L1813 1005L1822 1040
         Q1824 1053 1837 1056L1974 1088L1936 1163L1922 1190Q1913 1210 1887 1204L1777 1180Q1757 1176 1748 1193L1722 1238L1707 1237
         L1752 1147L1779 1095Q1783 1077 1763 1073L1688 1055L1497 997L1346 959Q1333 956 1320 960Q1292 976 1257 976
         C1190 976 1138 935 1138 890Q1138 874 1146 866Q1154 858 1151 845L1136 785Q1132 768 1126 760L1023 587Q1013 570 1013 553z"
      fill={TOP}
    />
    <path
      d="M1485 992L1344 958Q1333 955 1321 958Q1292 974 1257 974C1215 974 1178 958 1158 934"
      fill="none"
      stroke="#ccd0d3"
      strokeWidth="4"
    />
    <path
      d="M1485 988L1344 955Q1333 952 1320 955Q1292 970 1257 969C1190 969 1142 932 1142 890Q1142 876 1150 868Q1157 858 1154 844L1140 784Q1136 766 1130 758L1027 583Q1018 568 1018 553C1018 508 1068 471 1130 471"
      fill="none"
      strokeWidth="1"
    />
    <path d="M1752 847L1775 846M1813 1005Q1782 1007 1757 1017M1688 1055Q1705 1037 1725 1030M1495 975L1485 988" fill="none" />
    <path d="M1764 1074Q1783 1077 1779 1095L1767 1117z" fill="#6c7275" />

    {/* Pocket with slot */}
    <path
      d="M1095 655Q1095 643 1108 640L1240 598Q1266 592 1278 612L1296 640Q1299 648 1297 660L1275 780Q1272 800 1255 803L1223 807
         L1195 817Q1170 818 1166 800L1160 770Q1157 757 1150 747L1130 717z"
      fill="#b1b9be"
    />
    <path d="M1095 655Q1095 643 1108 640L1246 597L1247 685L1133 717z" fill="#7b8184" />
    <path d="M1096 652Q1098 643 1112 639V682z" fill="#8a8f93" />
    <path d="M1246 597Q1268 594 1278 612L1296 640Q1299 648 1297 660L1285 725L1275 700Q1265 680 1247 685z" fill="#70767a" />
    <path d="M1275 610L1277 696" strokeWidth="1" />
    <path d="M1133 717L1247 684Q1266 680 1276 695L1286 712L1284 725L1272 704Q1264 694 1250 697L1140 728z" fill="#c0c5c8" strokeWidth="1" />
    <path d="M1145 672Q1146 658 1160 653L1197 640Q1216 637 1218 650Q1217 667 1204 673L1162 687Q1146 690 1145 672z" fill="#a5aaad" />
    <path d="M1146 674Q1147 658 1160 653L1207 640Q1204 655 1192 662L1160 674z" fill="#fff" strokeWidth="1" />
    <path d="M1157 675L1162 687M1194 662L1199 675" fill="none" strokeWidth="1" />

    {/* Large stepped pocket */}
    <path
      d="M1298 664Q1300 652 1320 653L1593 718Q1605 722 1605 733Q1580 755 1589 778Q1582 789 1543 800L1383 852Q1367 853 1362 843
         Q1350 828 1330 820Q1318 811 1297 807L1282 805Q1272 800 1274 788z"
      fill={TOP}
    />
    <path d="M1313 659L1322 657L1593 723V738Q1580 758 1585 780Q1575 792 1548 798L1463 772L1313 733z" fill="url(#wall)" />
    <path d="M1302 664L1313 659V733L1299 808L1278 803z" fill="#7a8083" />
    <path d="M1301 664L1316 656" fill="none" stroke="#cdd1d4" strokeWidth="3" />
    <path d="M1302 664L1276 795" fill="none" stroke="#c9cdd0" strokeWidth="4" />
    <path d="M1312 740L1297 806M1308 738L1292 806" fill="none" strokeWidth="1" />
    <path d="M1320 655L1590 720Q1601 724 1602 735" fill="none" stroke="#c9cdd0" strokeWidth="4" />
    <path d="M1318 813L1462 770V781L1336 822z" fill="#6f7679" />
    <path d="M1350 831L1505 782L1513 789L1357 839z" fill="#676e71" />
    <path d="M1357 841L1513 793L1540 800" fill="none" strokeWidth="1" />

    {/* Lower web pocket */}
    <path
      d="M1382 875Q1384 869 1393 866L1473 843Q1488 842 1498 850L1680 997Q1692 1008 1689 1016Q1680 1029 1655 1023L1577 997L1380 947
         Q1362 940 1366 923Q1376 910 1380 896z"
      fill="#72777a"
    />
    <path d="M1382 875Q1384 869 1391 867V944L1380 947Q1362 940 1366 923Q1376 910 1380 896z" fill="#888d91" />
    <path d="M1392 867L1473 843L1462 921L1391 943z" fill="#787b7f" />
    <path d="M1386 945L1460 920Q1470 917 1480 923L1575 996z" fill="#a9b0b4" />
    <path d="M1388 944L1460 922Q1470 919 1478 924L1570 995" fill="none" stroke="#c0c5c8" strokeWidth="3" />
    <path d="M1492 846L1483 920" fill="none" />

    {/* Right web pocket */}
    <path
      d="M1492 833Q1492 820 1503 817L1575 796Q1588 792 1597 800Q1660 845 1717 809Q1738 804 1743 817L1775 965Q1776 975 1770 985L1755 1015
         Q1742 1038 1724 1029L1580 907L1496 842Q1492 838 1492 833z"
      fill={TOP}
    />
    <path d="M1492 833Q1492 820 1503 817L1578 795L1580 875L1553 884L1497 842z" fill="#84898d" />
    <path d="M1503 817V846" fill="none" strokeWidth="1" />
    <path d="M1578 795Q1590 793 1599 801L1601 882L1580 876z" fill="#6f7478" />
    <path d="M1599 801Q1660 843 1715 810L1717 888Q1660 912 1600 882z" fill="url(#bore)" />
    <path d="M1715 810Q1738 803 1743 817L1775 965Q1776 975 1770 982L1744 893L1717 888z" fill="#686e71" />
    <path d="M1553 884L1580 875Q1595 870 1602 882Q1660 914 1716 889Q1734 882 1745 896L1741 905Q1730 912 1722 913Q1660 936 1588 899L1577 904z" fill="url(#ring)" strokeWidth="1" />
    <path d="M1580 875Q1580 890 1588 899Q1600 893 1602 882M1716 889Q1718 903 1726 911" fill="none" strokeWidth="1" />
    <path d="M1728 911L1744 903L1768 985L1754 1015z" fill="#9ba1a5" strokeWidth="1" />
    <path d="M1494 843L1580 912L1724 1030" fill="none" stroke="#c3c7ca" strokeWidth="3" />

    {/* Bores */}
    <ellipse cx="1135" cy="550" rx="90" ry="63" fill="url(#bore)" />
    <g clipPath="url(#bore-a)"><ellipse cx="1136" cy="653" rx="90" ry="63" fill="#fff" /></g>
    <ellipse cx="1135" cy="550" rx="90" ry="63" fill="none" />
    <ellipse cx="1259" cy="887" rx="86" ry="60" fill="url(#bore)" />
    <g clipPath="url(#bore-b)"><ellipse cx="1261" cy="990" rx="86" ry="60" fill="#fff" /></g>
    <ellipse cx="1259" cy="887" rx="86" ry="60" fill="none" />
    <path d="M1587 780Q1582 755 1603 732" fill="none" stroke="#c3c7ca" strokeWidth="5" />
    <ellipse cx="1667" cy="766" rx="76" ry="56" fill="none" stroke={TOP} strokeWidth="4" />
    <ellipse cx="1667" cy="766" rx="73" ry="53" fill="url(#bore)" />
    <path d="M1597 800Q1612 815 1640 820Q1685 826 1715 809" fill="none" />
    <ellipse cx="1836" cy="1138" rx="60" ry="42" fill="url(#bore)" />

    {/* Screw holes */}
    <ellipse cx="1246" cy="580" rx="7" ry="6" fill="#45494c" />
    <ellipse cx="1081" cy="625" rx="7" ry="6" fill="#45494c" />
    <ellipse cx="1617" cy="708" rx="14" ry="10" fill="#54595c" strokeWidth="2" />
    <ellipse cx="1618" cy="711" rx="9" ry="6" fill="#a9aeb1" />
    <ellipse cx="1618" cy="712" rx="5" ry="4" fill="#3b3f42" />
    <ellipse cx="1758" cy="777" rx="14" ry="10" fill="#54595c" strokeWidth="2" />
    <ellipse cx="1758" cy="780" rx="9" ry="6" fill="#a9aeb1" />
    <ellipse cx="1758" cy="781" rx="5" ry="4" fill="#3b3f42" />

    {/* Clamp slit */}
    <path d="M1893 1152L1936 1162L1974 1089M1937 1162L1938 1247" fill="none" strokeWidth="3" />
  </g>
);

const Triad = () => (
  <g fill="none" strokeWidth="1.3" fontSize="16" fontFamily="'Open Sans', sans-serif">
    <path
      d="M615 1300L668 1311L649 1348L596 1337zM596 1337L597 1377L650 1388L649 1348M668 1311L670 1350L650 1388"
      stroke="#a9a9ad"
    />
    <path d="M631 1325V1292" stroke="#0f1590" strokeWidth="5" />
    <path d="M630 1276L637 1295L631 1300L624 1295z" fill="#0c1ea6" />
    <path d="M652 1307L660 1290" stroke="#58a94c" strokeWidth="6" />
    <path d="M665 1279L664 1296L653 1292z" fill="#5cb14f" />
    <path d="M659 1350L702 1361" stroke="#bb3237" strokeWidth="6" />
    <path d="M722 1365L698 1366L702 1353z" fill="#c4363c" />
    <text x="625" y="1271" fill="#3d3db8">Z</text>
    <text x="664" y="1276" fill="#5a9c50">Y</text>
    <text x="731" y="1374" fill="#c0505c">X</text>
  </g>
);

const Crosshair = () => (
  <g fill="none">
    <circle cx="859" cy="575" r="35" stroke="#333" strokeWidth="4" strokeDasharray="30 25" strokeDashoffset="-12" />
    <path d="M812 575h94M859 528v94" stroke="#2a2a2a" strokeWidth="9" />
    <path d="M816 575h86M859 532v86" stroke="#fff" strokeWidth="3" />
  </g>
);

const GraphicsWindow = () => (
  <main className="flex min-w-0 flex-1 flex-col bg-white">
    <div className="flex h-[40px] shrink-0 border-b-[3px] border-[#47878c] bg-[#f5f5f7] text-[19px] text-[#22222e]">
      <button type="button" className="flex w-[212px] items-center gap-[5px] pl-[7px] whitespace-nowrap">
        <svg viewBox="0 0 22 22" className="h-[22px] w-[22px]" fill="none" stroke="#55555b" strokeWidth="1.6">
          <path d="M1 1h9v9H1z" fill="#cf2340" stroke="none" />
          <path d="M10 1h4v20H1V11M14 3l6-2v20h-6" />
          <circle cx="8" cy="15" r="4" fill="#ddd" />
        </svg>
        Discovery Center
      </button>
      <div className="-mb-[1px] flex w-[328px] items-center border-b-[4px] border-[#2b6184] pt-[1px] pl-[7px]">
        <svg viewBox="0 0 32 32" className="h-[22px] w-[22px]" fill="none" stroke={INK} strokeWidth="2">
          <Bracket />
        </svg>
        <button type="button" className="pl-[4px]">NewMachiningRules_stp.prt</button>
        <svg viewBox="0 0 14 14" className="ml-auto h-[14px] w-[14px]" fill="none" stroke="#333" strokeWidth="1.6">
          <path d="M7 2H2v11h7v-3M8 1l4 4-4 4M12 5H7" />
        </svg>
        <button type="button" aria-label="Close tab" className="mr-[6px] ml-[4px]">
          <X className="h-[18px] w-[18px] text-black" strokeWidth={4} />
        </button>
      </div>
    </div>
    <svg viewBox="490 308 2070 1135" className="min-h-0 w-full flex-1" role="img" aria-label="NewMachiningRules_stp model">
      <Crosshair />
      <Part />
      <Triad />
    </svg>
  </main>
);

const App = () => {
  const [tab, setTab] = useState("Home");

  return (
    <div className="relative flex h-screen flex-col overflow-hidden font-['Open_Sans',sans-serif]">
      <header className="border-t-2 border-[#3e3e3c] bg-[#2a2744] text-[#f1f1f6]">
        <TitleBar />
        <TabBar active={tab} onSelect={setTab} />
      </header>
      <Ribbon />
      <SelectionBar />
      <div className="flex min-h-0 flex-1">
        <ResourceBar />
        <Navigator />
        <GraphicsWindow />
      </div>
      <div className="absolute bottom-0 left-0 flex h-[173px] w-[555px] flex-col justify-center bg-[#6abbca] pt-[18px] pr-[26px] text-center font-['Noto_Sans_CJK_SC',sans-serif] text-[46px] leading-[69px] font-bold text-black">
        <p>DFMPro for NX</p>
        <p className="whitespace-nowrap">New Machining Rules</p>
      </div>
    </div>
  );
};

export default App;
